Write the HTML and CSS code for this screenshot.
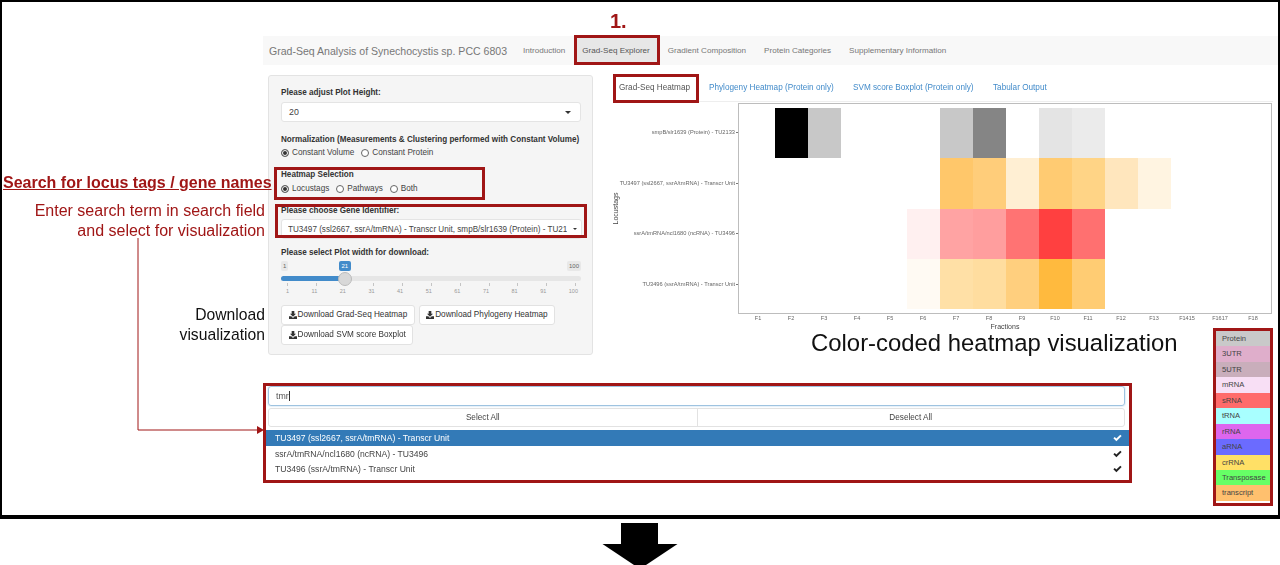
FILE: index.html
```html
<!DOCTYPE html>
<html lang="en">
<head>
<meta charset="utf-8">
<title>Grad-Seq Explorer</title>
<link rel="stylesheet" href="styles.css">
</head>
<body>
<svg width="0" height="0" class="defs"><defs>
<symbol id="dl" viewBox="0 0 12 12"><path d="M4 0h4v4h2.5L6 8.6 1.500 4H4z"/><path d="M0 8h3.400L6 10.400 8.600 8H12v4H0z"/></symbol>
<symbol id="ck" viewBox="0 0 12 10"><path d="M0.500 5.300 2.300 3.500 4.500 5.700 9.700 0.500 11.500 2.300 4.500 9.300z"/></symbol>
</defs></svg>
<div class="frame">
  <div class="app">
    <nav class="navbar">
      <span class="brand">Grad-Seq Analysis of Synechocystis sp. PCC 6803</span>
      <span class="navitem">Introduction</span>
      <span class="navitem active">Grad-Seq Explorer</span>
      <span class="navitem">Gradient Composition</span>
      <span class="navitem">Protein Categories</span>
      <span class="navitem">Supplementary Information</span>
    </nav>
    <div class="content">
      <aside class="well">
        <div class="label">Please adjust Plot Height:</div>
        <div class="select"><span>20</span><i class="caret"></i></div>
        <div class="label norm">Normalization (Measurements &amp; Clustering performed with Constant Volume)</div>
        <div class="radios"><span class="radio on">Constant Volume</span><span class="radio">Constant Protein</span></div>
        <div class="label heat">Heatmap Selection</div>
        <div class="radios"><span class="radio on">Locustags</span><span class="radio">Pathways</span><span class="radio">Both</span></div>
        <div class="label gene">Please choose Gene Identifier:</div>
        <div class="select genesel"><span>TU3497 (ssl2667, ssrA/tmRNA) - Transcr Unit, smpB/slr1639 (Protein) - TU21</span><i class="caret small"></i></div>
        <div class="label width">Please select Plot width for download:</div>
        <div class="slider">
          <div class="bubbles"><b>1</b><b class="cur">21</b><b>100</b></div>
          <div class="track"><div class="fill"></div><div class="thumb"></div></div>
          <div class="ticks"><span>1</span><span>11</span><span>21</span><span>31</span><span>41</span><span>51</span><span>61</span><span>71</span><span>81</span><span>91</span><span>100</span></div>
        </div>
        <div class="buttons">
          <span class="btn"><svg class="dl"><use href="#dl"/></svg>Download Grad-Seq Heatmap</span>
          <span class="btn"><svg class="dl"><use href="#dl"/></svg>Download Phylogeny Heatmap</span>
          <span class="btn"><svg class="dl"><use href="#dl"/></svg>Download SVM score Boxplot</span>
        </div>
      </aside>
      <main class="panel">
        <div class="tabs">
          <span class="tab active">Grad-Seq Heatmap</span>
          <span class="tab">Phylogeny Heatmap (Protein only)</span>
          <span class="tab">SVM score Boxplot (Protein only)</span>
          <span class="tab">Tabular Output</span>
        </div>
        <div class="plot">
          <div class="ytitle"><span>Locustags</span></div>
          <div class="ylabels">
            <span>smpB/slr1639 (Protein) - TU2133</span>
            <span>TU3497 (ssl2667, ssrA/tmRNA) - Transcr Unit</span>
            <span>ssrA/tmRNA/ncl1680 (ncRNA) - TU3496</span>
            <span>TU3496 (ssrA/tmRNA) - Transcr Unit</span>
          </div>
          <div class="plotcol">
            <div class="grid">
              <i></i><i class="k0"></i><i class="k1"></i><i></i><i></i><i></i><i class="k1"></i><i class="k2"></i><i></i><i class="k3"></i><i class="k4"></i><i></i><i></i><i></i><i></i><i></i>
              <i></i><i></i><i></i><i></i><i></i><i></i><i class="o1"></i><i class="o2"></i><i class="o3"></i><i class="o4"></i><i class="o5"></i><i class="o6"></i><i class="o7"></i><i></i><i></i><i></i>
              <i></i><i></i><i></i><i></i><i></i><i class="r1"></i><i class="r2"></i><i class="r3"></i><i class="r4"></i><i class="r5"></i><i class="r6"></i><i></i><i></i><i></i><i></i><i></i>
              <i></i><i></i><i></i><i></i><i></i><i class="y1"></i><i class="y2"></i><i class="y3"></i><i class="y4"></i><i class="y5"></i><i class="y6"></i><i></i><i></i><i></i><i></i><i></i>
            </div>
            <div class="xticks"><span>F1</span><span>F2</span><span>F3</span><span>F4</span><span>F5</span><span>F6</span><span>F7</span><span>F8</span><span>F9</span><span>F10</span><span>F11</span><span>F12</span><span>F13</span><span>F1415</span><span>F1617</span><span>F18</span></div>
            <div class="xtitle">Fractions</div>
          </div>
        </div>
      </main>
    </div>
    <section class="dropdown">
      <div class="search">tmr<i class="cursor"></i></div>
      <div class="actions"><span>Select All</span><span>Deselect All</span></div>
      <ul class="options">
        <li class="sel"><span>TU3497 (ssl2667, ssrA/tmRNA) - Transcr Unit</span><svg class="ck"><use href="#ck"/></svg></li>
        <li><span>ssrA/tmRNA/ncl1680 (ncRNA) - TU3496</span><svg class="ck"><use href="#ck"/></svg></li>
        <li><span>TU3496 (ssrA/tmRNA) - Transcr Unit</span><svg class="ck"><use href="#ck"/></svg></li>
      </ul>
    </section>
  </div>

  <div class="note step">1.</div>
  <div class="note heading">Search for locus tags / gene names</div>
  <div class="note hint">Enter search term in search field<br>and select for visualization</div>
  <div class="note dlnote">Download<br>visualization</div>
  <div class="note colornote">Color-coded heatmap visualization</div>

  <div class="box b-nav"></div>
  <div class="box b-tab"></div>
  <div class="box b-heat"></div>
  <div class="box b-gene"></div>
  <div class="box b-drop"></div>

  <svg class="connector" viewBox="0 0 130 200"><path d="M1 0V192H122" fill="none" stroke="#a01616" stroke-width="1"/><path d="M120 188 127 192 120 196z" fill="#a01616"/></svg>

  <ul class="legend">
    <li class="l1">Protein</li><li class="l2">3UTR</li><li class="l3">5UTR</li><li class="l4">mRNA</li><li class="l5">sRNA</li><li class="l6">tRNA</li><li class="l7">rRNA</li><li class="l8">aRNA</li><li class="l9">crRNA</li><li class="l10">Transposase</li><li class="l11">transcript</li>
  </ul>
</div>
<svg class="bigarrow" viewBox="0 0 76 46"><path d="M19 0H56V21H75.500L38 46 0.500 21H19z"/></svg>
</body>
</html>
```

FILE: styles.css
```css
* { box-sizing: border-box; }
html, body { margin: 0; padding: 0; background: #fff; overflow: hidden; }
body { width: 1280px; height: 565px; font-family: "Liberation Sans", Arial, sans-serif; color: #333; position: relative; }
.defs { position: absolute; }
i { font-style: normal; }
ul { list-style: none; margin: 0; padding: 0; }

.frame { position: relative; width: 1280px; height: 519px; border: solid #000; border-width: 2px 2px 4px 2px; }
.app { padding: 34px 0 0 261px; filter: blur(0.35px); }

.navbar { display: flex; align-items: center; height: 29px; background: #f8f8f8; padding-left: 6px; font-size: 8.1px; color: #777; }
.brand { font-size: 10.55px; width: 246px; white-space: nowrap; color: #777; }
.navitem { padding: 0 8px; height: 29px; line-height: 29px; white-space: nowrap; margin-right: 2px; }
.navitem.active { background: #e7e7e7; color: #555; margin-left: -1px; }

.content { display: flex; margin-top: 10px; padding-left: 5px; height: 280px; }
.well { width: 325px; height: 280px; background: #f5f5f5; border: 1px solid #e3e3e3; border-radius: 3px; padding: 12px 11px 0 12px; }
.label { font-size: 8.13px; font-weight: 700; color: #333; line-height: 10px; white-space: nowrap; }
.select { display: flex; justify-content: space-between; align-items: center; height: 20px; margin-top: 4px; background: #fff; border: 1px solid #e4e4e4; border-radius: 3px; padding: 0 9px 0 7px; font-size: 8.8px; color: #444; }
.caret { width: 0; height: 0; border: 3px solid transparent; border-top-color: #333; border-bottom: 0; }
.caret.small { border-width: 2.5px; border-bottom: 0; flex: none; }
.norm { margin-top: 13px; }
.radios { display: flex; gap: 7px; margin-top: 3px; font-size: 8.2px; color: #444; line-height: 10px; height: 10px; }
.heat + .radios { margin-top: 4px; }
.radio { display: inline-flex; align-items: center; gap: 3px; }
.radio::before { content: ""; width: 6px; height: 6px; border: 1px solid #666; border-radius: 50%; background: #fff; }
.radio.on::before { background: #333; box-shadow: inset 0 0 0 1px #fff; }
.heat { margin-top: 12px; }
.gene { margin-top: 12px; }
.genesel { margin-top: 3px; padding: 0 4px 0 6px; width: 301px; font-size: 8.15px; white-space: nowrap; }
.genesel span { overflow: hidden; }
.width { margin-top: 9px; }
.slider { margin-top: 3px; width: 300px; }
.bubbles { display: flex; justify-content: space-between; height: 10px; position: relative; }
.bubbles b { font-weight: 400; font-size: 6px; line-height: 10px; padding: 0 2px; background: #e8e8e8; color: #666; border-radius: 2px; }
.bubbles .cur { position: absolute; left: 58px; background: #428bca; color: #fff; padding: 0 2.5px; }
.track { position: relative; height: 5px; margin-top: 5px; background: #e6e6e6; border-radius: 3px; }
.fill { width: 64px; height: 5px; background: #428bca; border-radius: 3px 0 0 3px; }
.thumb { position: absolute; left: 57px; top: -4.5px; width: 14px; height: 14px; border-radius: 50%; background: #d8d8d8; border: 1px solid #bbb; }
.ticks { display: flex; justify-content: space-between; margin-top: 1.5px; padding: 4px 3px 0 5px; font-size: 5.5px; line-height: 8px; color: #999; background: repeating-linear-gradient(90deg, #c4c4c4 0 1px, transparent 1px 28.8px) 6px 0 / 100% 3px no-repeat; }
.buttons { display: flex; flex-wrap: wrap; gap: 0 4px; margin-top: 10px; }
.btn { display: inline-flex; align-items: center; height: 20px; background: #fff; border: 1px solid #e2e2e2; border-radius: 3px; padding: 0 6.5px; font-size: 8.2px; color: #333; white-space: nowrap; }
.dl { width: 8px; height: 8px; margin-right: 1px; fill: #333; }

.panel { width: 660px; margin-left: 20px; }
.tabs { display: flex; height: 28px; border-bottom: 1px solid #eee; margin-top: -1px; font-size: 8.2px; color: #428bca; align-items: center; }
.tab { padding: 0 6px; line-height: 27px; white-space: nowrap; }
.tab.active { color: #555; background: #fff; width: 85px; margin-right: 5px; }
.tab:nth-child(2) { width: 144px; }
.tab:nth-child(3) { width: 140px; }
.plot { display: flex; margin-top: 1px; height: 234px; }
.ytitle { width: 6px; height: 211px; display: flex; align-items: center; justify-content: center; font-size: 7px; color: #444; }
.ytitle span { transform: rotate(-90deg); white-space: nowrap; }
.ylabels { width: 119px; height: 211px; padding: 4px 0 5px; display: flex; flex-direction: column; justify-content: space-around; align-items: flex-end; font-size: 5.7px; color: #666; white-space: nowrap; }
.ylabels span::after { content: ""; display: inline-block; width: 2px; height: 1px; background: #777; margin-left: 1px; vertical-align: middle; }
.plotcol { width: 534px; }
.grid { display: grid; grid-template-columns: repeat(16, 33px); grid-template-rows: repeat(4, 50.25px); height: 211px; padding: 4px 3px 5px 2.5px; border: 1px solid #bdbdbd; background: #fff; }
.k0 { background: #000; } .k1 { background: #c8c8c8; } .k2 { background: #858585; } .k3 { background: #e4e4e4; } .k4 { background: #ebebeb; }
.o1 { background: #ffc76a; } .o2 { background: #ffcd7a; } .o3 { background: #ffefd3; } .o4 { background: #ffcb72; } .o5 { background: #ffd486; } .o6 { background: #ffe6bd; } .o7 { background: #fff4e1; }
.r1 { background: #fff0f0; } .r2 { background: #ffa3a3; } .r3 { background: #ff9e9e; } .r4 { background: #ff7373; } .r5 { background: #ff4040; } .r6 { background: #ff7070; }
.y1 { background: #fffaf3; } .y2 { background: #ffe0a6; } .y3 { background: #ffdd9f; } .y4 { background: #ffcf7e; } .y5 { background: #ffba3e; } .y6 { background: #ffcc73; }
.xticks { display: grid; grid-template-columns: repeat(16, 33px); padding-left: 3.5px; font-size: 5.5px; line-height: 8px; text-align: center; color: #666; }
.xtitle { font-size: 7px; line-height: 9px; color: #444; text-align: center; width: 534px; }

.dropdown { margin: 31px 0 0 3px; width: 863px; }
.search { height: 20px; width: 857px; margin-left: 2px; border: 1px solid #9ec3e0; border-radius: 3px; box-shadow: 0 0 2px #a9cbe6; padding-left: 7px; font-size: 8.8px; line-height: 18px; color: #555; }
.cursor { display: inline-block; width: 1px; height: 10px; background: #333; vertical-align: -2px; }
.actions { display: grid; grid-template-columns: 1fr 1fr; height: 19px; width: 857px; margin: 2px 0 0 2px; border: 1px solid #e2e2e2; border-radius: 3px; font-size: 8.2px; line-height: 17px; text-align: center; color: #444; }
.actions span + span { border-left: 1px solid #e2e2e2; }
.options { margin-top: 3px; font-size: 8.6px; color: #444; }
.options li { display: flex; justify-content: space-between; align-items: center; height: 15.5px; padding: 0 7px 0 9px; }
.options .sel { height: 16px; background: #337ab7; color: #fff; }
.ck { width: 9px; height: 8px; fill: #222; }
.sel .ck { fill: #fff; }

.note { position: absolute; white-space: nowrap; }
.step { left: 608px; top: 8px; font-size: 20px; line-height: 23px; font-weight: 700; color: #a01616; }
.heading { left: 1px; top: 172px; font-size: 16px; line-height: 18px; font-weight: 700; color: #a01616; text-decoration: underline; }
.hint { right: 1013px; top: 199px; text-align: right; font-size: 16px; line-height: 20px; color: #a01616; }
.dlnote { right: 1013px; top: 303px; text-align: right; font-size: 15.7px; line-height: 19.5px; color: #111; }
.colornote { left: 809px; top: 327px; font-size: 23.9px; line-height: 28px; color: #111; }

.box { position: absolute; border: 3px solid #a01616; }
.b-nav { left: 572px; top: 33px; width: 86px; height: 30px; }
.b-tab { left: 611px; top: 72px; width: 86px; height: 29px; }
.b-heat { left: 272px; top: 165px; width: 211px; height: 33px; }
.b-gene { left: 273px; top: 202px; width: 312px; height: 34px; }
.b-drop { left: 261px; top: 381px; width: 869px; height: 100px; }

.connector { position: absolute; left: 135px; top: 236px; width: 130px; height: 200px; }

.legend { position: absolute; left: 1211px; top: 326px; width: 60px; height: 178px; border: 3px solid #a01616; font-size: 7.6px; color: #444; }
.legend li { height: 15.45px; line-height: 15.45px; padding-left: 6px; white-space: nowrap; }
.l1 { background: #c9c9c9; } .l2 { background: #dfaecb; } .l3 { background: #c9aebb; } .l4 { background: #f8dff5; } .l5 { background: #ff6b6b; } .l6 { background: #a8ffff; } .l7 { background: #dd66ee; } .l8 { background: #6b6bff; } .l9 { background: #ffe066; } .l10 { background: #66ff66; } .l11 { background: #ffc06e; }

.bigarrow { position: absolute; left: 602px; top: 523px; width: 76px; height: 46px; fill: #000; }
```
